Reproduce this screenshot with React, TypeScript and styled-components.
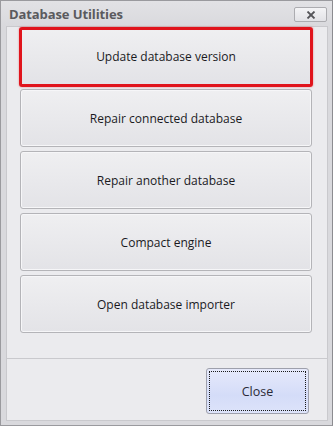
import React from "react";
import styled, { createGlobalStyle } from "styled-components";

const Global = createGlobalStyle`
  html, body { margin: 0; padding: 0; background: #d8d8dc; }
  * { box-sizing: border-box; }
`;

const Window = styled.div`
  width: 333px;
  height: 426px;
  display: flex;
  flex-direction: column;
  background: linear-gradient(#e2e2e5, #d9d9dd 26px);
  border: 1px solid #9a9a9e;
  border-right-color: #8c8c90;
  padding: 0 4px 4px 5px;
  font-family: "Open Sans", "Noto Sans", sans-serif;
`;

const TitleBar = styled.div`
  height: 25px;
  display: flex;
  align-items: center;
  justify-content: space-between;
  padding: 0 1px 0 3px;
`;

const Title = styled.div`
  font-size: 13px;
  font-weight: 700;
  color: #5a5a5e;
  letter-spacing: -0.1px;
`;

const CloseX = styled.div`
  width: 33px;
  height: 15px;
  margin-top: 2px;
  border: 1px solid #acacb0;
  border-radius: 2px;
  background: linear-gradient(#f4f4f6, #e2e2e6);
  display: flex;
  align-items: center;
  justify-content: center;
`;

const Body = styled.div`
  height: 332px;
  display: flex;
  flex-direction: column;
  background: #ebebee;
  border: 1px solid #c9c9cd;
  border-bottom: none;
  padding: 0 15px 0 13px;
  gap: 4px;
`;

const ActionButton = styled.div<{ $focused?: boolean }>`
  flex: none;
  height: ${(p) => (p.$focused ? "60px" : "58px")};
  margin: ${(p) => (p.$focused ? "0 -1px -2px -1px" : "0")};
  display: flex;
  align-items: center;
  justify-content: center;
  padding-bottom: ${(p) => (p.$focused ? "2px" : "0")};
  font-size: 12px;
  color: #1a1a1e;
  border-radius: 3px;
  background: linear-gradient(#efeff1, #e3e3e7);
  border: ${(p) => (p.$focused ? "3px solid #e0141c" : "1px solid #b4b4b8")};
  box-shadow: ${(p) => (p.$focused ? "0 0 2px rgba(230,20,30,0.5)" : "inset 0 0 0 1px #f6f6f8")};
  position: relative;
  z-index: ${(p) => (p.$focused ? 1 : 0)};
`;

const Footer = styled.div`
  height: 63px;
  background: #ebebee;
  border: 1px solid #c9c9cd;
  display: flex;
  align-items: center;
  justify-content: flex-end;
  padding: 3px 18px 0 0;
`;

const CloseButton = styled.div`
  width: 103px;
  height: 46px;
  border: 1px solid #9ea0ac;
  border-radius: 3px;
  background: linear-gradient(#e6e9fb, #d4dcf8 60%, #dde3fa);
  padding: 2px;
  display: flex;
`;

const FocusRing = styled.div`
  flex: 1;
  border: 1px dotted #1a1a1a;
  display: flex;
  align-items: center;
  justify-content: center;
  font-size: 12.5px;
  color: #2a2a36;
`;

const labels = [
  "Update database version",
  "Repair connected database",
  "Repair another database",
  "Compact engine",
  "Open database importer",
];

export default function App() {
  return (
    <>
      <Global />
      <Window>
        <TitleBar>
          <Title>Database Utilities</Title>
          <CloseX>
            <svg width="10" height="8" viewBox="0 0 10 8">
              <path d="M1.5 0.5 L8.5 7.5 M8.5 0.5 L1.5 7.5" stroke="#555559" strokeWidth="1.8" />
            </svg>
          </CloseX>
        </TitleBar>
        <Body>
          {labels.map((l, i) => (
            <ActionButton key={l} $focused={i === 0}>
              {l}
            </ActionButton>
          ))}
        </Body>
        <Footer>
          <CloseButton>
            <FocusRing>Close</FocusRing>
          </CloseButton>
        </Footer>
      </Window>
    </>
  );
}
